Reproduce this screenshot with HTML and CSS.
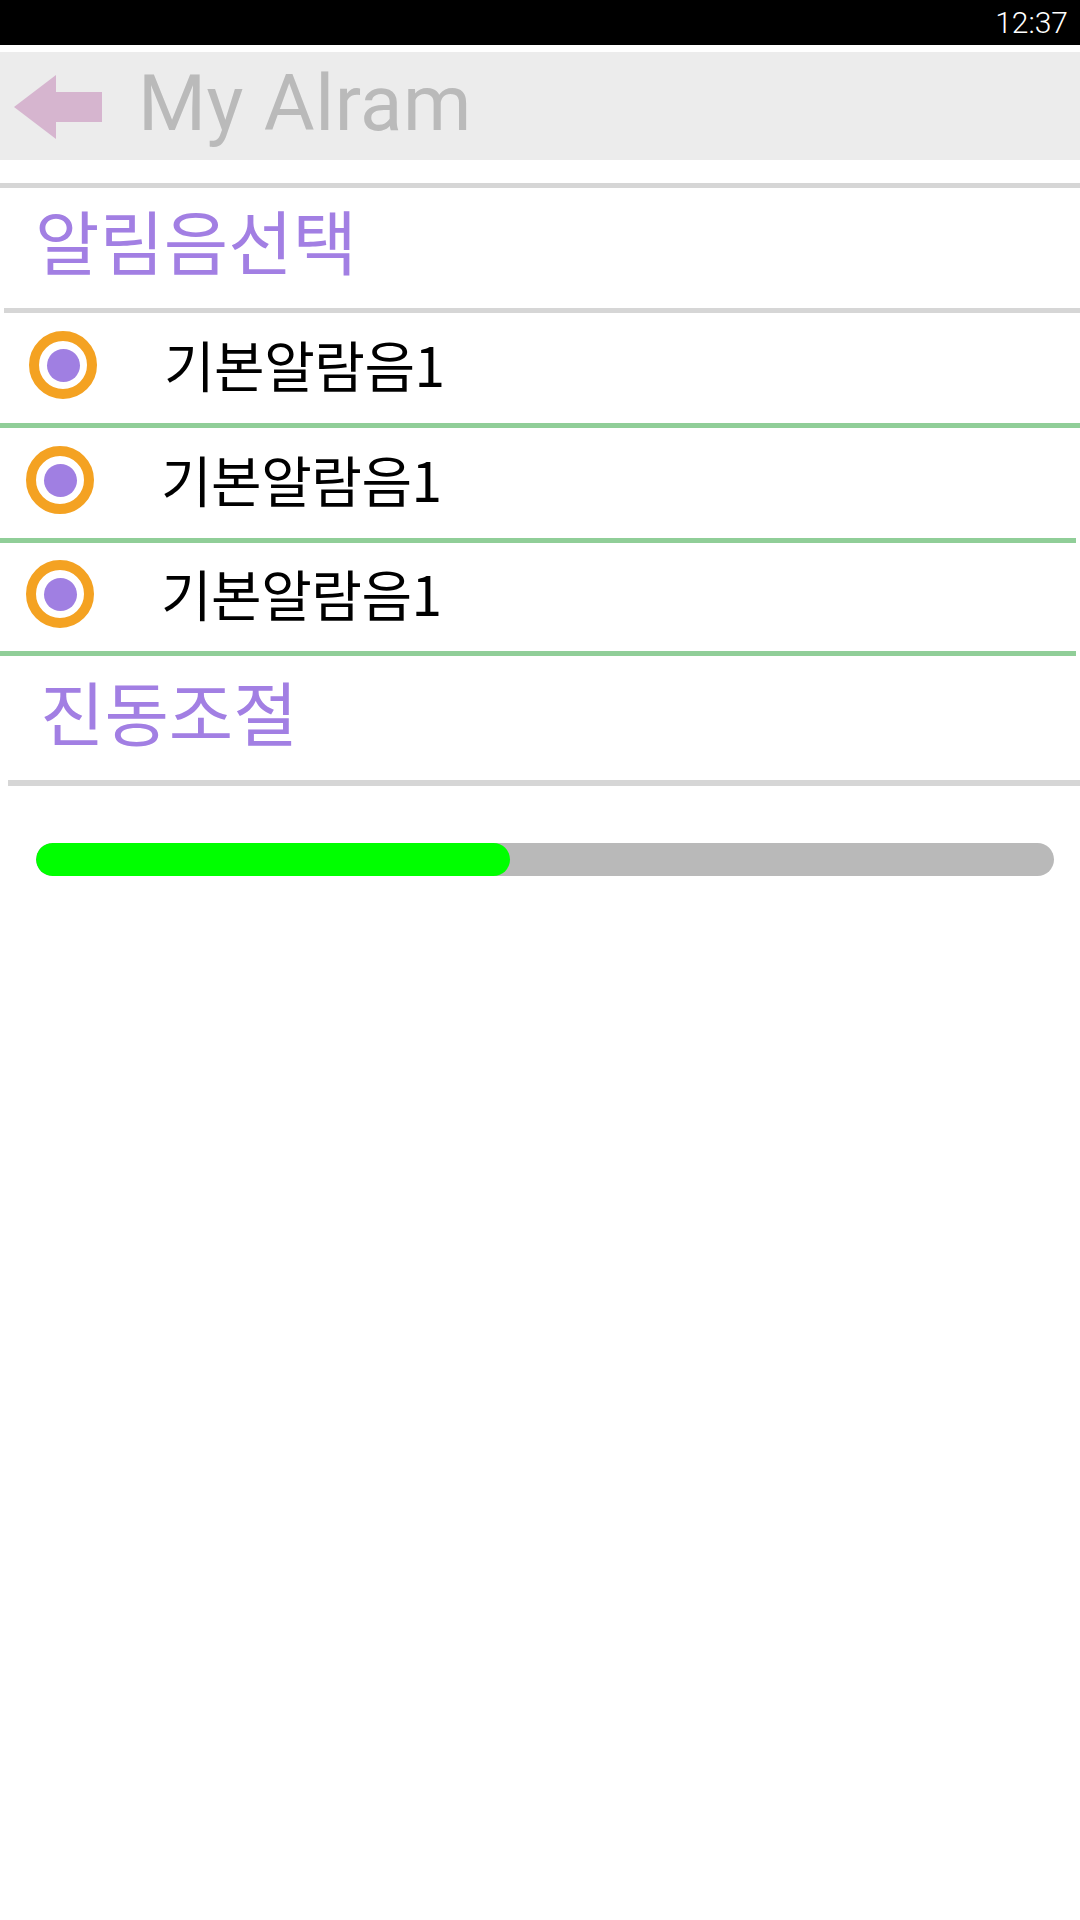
FILE: index.html
```html
<!DOCTYPE html>
<html lang="ko">
<head>
<meta charset="utf-8">
<title>My Alram</title>
<link rel="stylesheet" href="styles.css">
</head>
<body>
<div class="status-bar"><span class="time">12:37</span></div>
<header class="app-bar">
  <svg class="back" width="88" height="64" viewBox="0 0 88 64" aria-hidden="true">
    <polygon points="0,32 42,0 42,17 88,17 88,47 42,47 42,64" fill="#d6b5cf"/>
  </svg>
  <h1 class="title">My Alram</h1>
</header>
<main class="content">
  <div class="rule rule-top"></div>
  <div class="section-title first-title">알림음선택</div>
  <div class="rule rule-mid"></div>
  <ul class="options">
    <li class="option option-first"><span class="radio"></span><span class="label">기본알람음1</span></li>
    <li class="option"><span class="radio"></span><span class="label">기본알람음1</span></li>
    <li class="option option-last"><span class="radio"></span><span class="label">기본알람음1</span></li>
  </ul>
  <div class="section-title second-title">진동조절</div>
  <div class="rule rule-bottom"></div>
  <div class="progress"><div class="progress-fill" style="width:46.6%"></div></div>
</main>
</body>
</html>
```

FILE: styles.css
```css
* { box-sizing: border-box; }
html, body { margin: 0; padding: 0; background: #ffffff; }
body {
  width: 1080px;
  height: 1920px;
  font-family: Roboto, "Noto Sans", "Noto Sans CJK KR", sans-serif;
  overflow: hidden;
}

.status-bar {
  height: 45px;
  background: #000000;
  display: flex;
  align-items: center;
  justify-content: flex-end;
  padding-right: 12px;
}
.time {
  color: #ffffff;
  font-family: Roboto, sans-serif;
  font-weight: 300;
  font-size: 30px;
  line-height: 1;
}

.app-bar {
  margin-top: 7px;
  height: 108px;
  background: #ececec;
  display: flex;
  align-items: center;
  padding-left: 14px;
}
.back { display: block; flex: none; margin-top: 2px; }
.title {
  margin: 0 0 4px 36px;
  font-family: Roboto, sans-serif;
  font-weight: 400;
  font-size: 78px;
  letter-spacing: 0.5px;
  line-height: 1;
  color: #bababa;
}

.content { margin-top: 23px; }

.rule { height: 5px; background: #d6d6d6; }
.rule-mid { margin-left: 4px; }
.rule-bottom { margin-left: 8px; height: 6px; }

.section-title {
  display: flex;
  align-items: center;
  font-family: "Noto Sans CJK KR", sans-serif;
  font-size: 70px;
  letter-spacing: 0px;
  line-height: 1;
  color: #a27fe3;
}
.first-title { height: 120px; padding-left: 35px; padding-bottom: 17px; }
.second-title { height: 124px; padding-left: 40px; padding-bottom: 14px; }

.options { list-style: none; margin: 0; padding: 0; }
.option {
  display: flex;
  align-items: center;
  border-bottom: 5px solid #90ce98;
  padding-left: 26px;
  padding-bottom: 6px;
}
.option-first { height: 117px; padding-left: 29px; }
.option { height: 115px; }
.option-last { height: 113px; }
.option + .option { margin-right: 4px; }

.radio {
  flex: none;
  width: 68px;
  height: 68px;
  border-radius: 50%;
  border: 10px solid #f4a222;
  background: #ffffff;
  display: flex;
  align-items: center;
  justify-content: center;
}
.radio::after {
  content: "";
  width: 33px;
  height: 33px;
  border-radius: 50%;
  background: #a07fe2;
}
.label {
  margin-left: 67px;
  font-family: "Noto Sans CJK KR", sans-serif;
  font-size: 55px;
  letter-spacing: -0.5px;
  line-height: 1;
  color: #000000;
  margin-top: -3px;
}

.progress {
  margin: 57px 26px 0 36px;
  height: 33px;
  border-radius: 17px;
  background: #b9b9b9;
  overflow: hidden;
}
.progress-fill {
  height: 100%;
  background: #00ff00;
  border-radius: 17px;
}
```
